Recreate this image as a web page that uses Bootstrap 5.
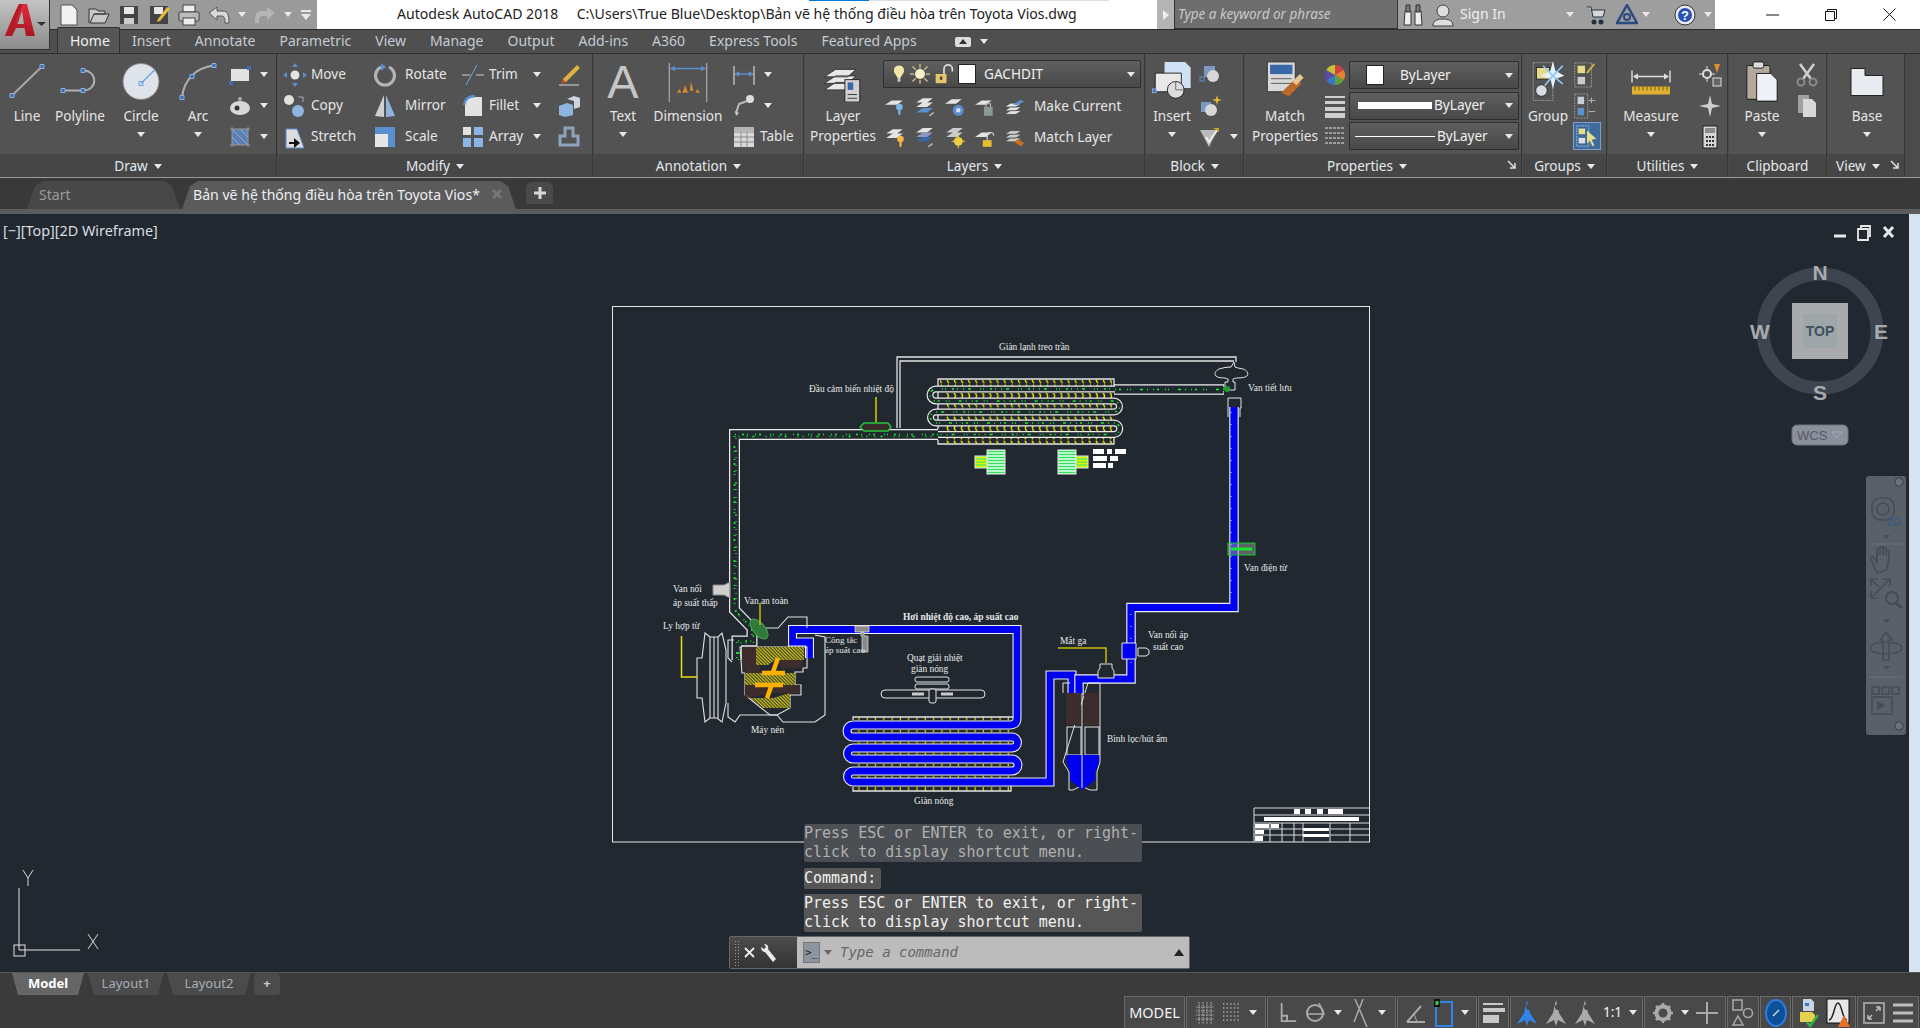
<!DOCTYPE html>
<html lang="vi">
<head>
<meta charset="UTF-8" />
<title>Autodesk AutoCAD 2018</title>
<link href="https://cdn.jsdelivr.net/npm/bootstrap@5.3.2/dist/css/bootstrap.min.css" rel="stylesheet" />
<style>
html,body{height:100%;overflow:hidden}
body{background:#3a3a3a;font-family:"Noto Sans","Liberation Sans",sans-serif;font-size:13.6px;color:#e6e6e6;line-height:1.2}
.app{width:1920px;height:1028px}
.defs-svg{position:absolute}
svg{display:block;flex:none}
.tri{display:inline-block;flex:none;width:0;height:0;border-left:4px solid transparent;border-right:4px solid transparent;border-top:5px solid #e8e8e8}
/* title row */
.title-row{height:29px;background:#fff;flex:none}
.qat{width:317px;background:#9a9a9a;padding-left:58px;gap:8px;height:29px}
.app-btn{position:absolute;left:0;top:0;width:50px;height:50px;background:linear-gradient(#c4c4c4,#8b8b8b);border:1px solid #333;border-left:0;border-top:0;z-index:5}
.title-text{width:840px;padding-left:80px;color:#222;font-size:14.1px;white-space:pre;position:relative}
.title-text::before{content:"";position:absolute;left:492px;top:0;height:1px;width:60px;background:#0078d7}
.title-text::after{content:"";position:absolute;left:552px;top:0;height:1px;width:240px;background:#ddd}
.search-handle{width:17px;background:#b4b4b4}
.search-box{width:224px;background:#6e6e6e;border:1px solid #333;border-top:0;color:#c8c8c8;font-style:italic;padding-left:3px;font-size:13.5px}
.info-zone{width:317px;background:#9e9e9e;color:#efefef;position:relative;white-space:nowrap;font-size:14px}
.iz-bino{margin-left:5px}.iz-user{margin-left:9px}.iz-name{margin-left:6px}.iz-t1{margin-left:60px}.iz-cart{margin-left:12px}.iz-a360{margin-left:10px}.iz-t2{margin-left:4px}.iz-help{margin-left:24px}.iz-t3{margin-left:8px}
.win-btns{width:205px}
.wb-min{margin-right:45px}.wb-max{margin-right:46px}.wb-close{margin-right:24px}
/* ribbon tabs */
.rib-tabs{height:24px;background:#4f4f4f;padding-left:57px;flex:none;border-top:1px solid #2b2b2b}
.rib-tabs .nav-link{padding:0 12px;height:23px;line-height:22px;color:#c3ccd4;font-size:14px;border:0}
.rib-tabs .nav-link.active{background:#565656;color:#f0f0f0;border:1px solid #2f2f2f;border-bottom:0;border-radius:2px 2px 0 0;padding:0 12px;margin-top:-3px;height:26px;line-height:25px;width:63px}
.rib-extra{margin-left:25px}
/* ribbon panels */
.ribbon{height:125px;background:#4b4b4b;flex:none;border-top:1px solid #2f2f2f;border-bottom:1px solid #9a9a9a}
.rp{background:#535353;border-right:1px solid #373737;margin-right:1px;height:123px}
.rp-body{height:100px;padding-top:5px;overflow:hidden}
.rp-foot{height:23px;background:#464646;gap:6px;position:relative;color:#e4e8ec;white-space:nowrap;padding-top:1px}
.foot-launch{padding-right:32px}
.launch{position:absolute;right:4px;top:6px}
.big{display:flex;flex-direction:column;align-items:center;text-align:center;line-height:20px}
.big-ic{height:41px;margin-top:2px;margin-bottom:4px}
.big .tri{margin-top:6px}
.txt-a{font-family:"Liberation Sans",sans-serif;font-size:47px;line-height:41px;color:#c6c6c6}
.sm-row{height:31px;display:flex;align-items:center;white-space:nowrap}
.lbl-ms{margin-left:4px}
.lbl-6{margin-left:6px}
#p-draw{width:277px}#p-modify{width:315px}#p-annot{width:210px}#p-layers{width:340px}#p-block{width:98px}#p-props{width:277px}#p-groups{width:84px}#p-util{width:120px}#p-clip{width:98px}#p-view{width:77px}
.w44{width:44px}.w50{width:50px}.w52{width:52px}.w54{width:54px}.w58{width:58px}.w66{width:66px}.w70{width:70px}.w72{width:72px}.w76{width:76px}.w78{width:78px}.w80{width:80px}.w86{width:86px}
.mod1{width:90px;margin-left:5px}.mod2{width:88px}.mod3{width:96px}.mod4{width:30px}
.combo{height:28px;background:linear-gradient(#5f5f5f,#484848);border:1px solid #2e2e2e;border-radius:1px;padding:0 5px 0 8px;color:#f0f0f0}
.combo-lay{width:258px;margin-left:2px;margin-top:1px;margin-bottom:3px;gap:4px}
.lay-rows{margin-left:3px}
.swatch{width:18px;height:20px;background:#fff;border:1px solid #222}
.prop-rows{gap:2.5px;margin-top:2px}
.prop-combo{width:170px;margin-left:4px}
.sample{background:#fff;margin-right:2px}
.thick{width:74px;height:7px}
.thin{width:80px;height:1px;margin-left:-3px}
.active-ic{background:#3e6a9e;border:1px solid #7da0c8;height:28px;width:28px;display:flex;align-items:center;justify-content:center;margin-top:1px}
/* doc tabs */
.doc-bar{height:36px;background:#393939;padding-left:27px;gap:2px;flex:none;border-bottom:5px solid #5c5c5c}
.doc-tab{height:28px;margin-top:3px;padding:0 30px 0 12px;color:#9a9a9a;background:#484848;clip-path:polygon(0 100%,8px 5px,16px 0,calc(100% - 16px) 0,calc(100% - 8px) 5px,100% 100%);font-size:14.1px;line-height:27px;white-space:nowrap}
.doc-start{width:153px;padding-left:12px}
.doc-cur{width:334px;padding-left:11px;color:#eceff2;background:#5b5b5b;gap:12px}
.doc-plus{width:27px;height:22px;margin:4px 0 0 8px;background:#4a4a4a;border-radius:6px 6px 2px 2px;color:#d8d8d8}
/* viewport */
.vport{height:758px;background:#212830;position:relative;flex:none;overflow:hidden}
.vp-draw{position:absolute;left:0;top:0}
.vp-label{position:absolute;left:3px;top:8px;color:#d9dde0;font-size:14.4px}
.vp-btns{position:absolute;left:1832px;top:11px}
.scroll-edge{position:absolute;left:1909px;top:0;width:11px;height:100%;background:#d6e4f1}
.compass{position:absolute;left:1750px;top:44px}
.wcs-chip{position:absolute;left:1790px;top:210px}
.nav-bar{position:absolute;left:1866px;top:262px;width:40px;height:259px;background:#5a6068;border-radius:3px}
.tip{position:absolute;left:804px;width:338px;background:#565656;border-radius:2px;font-family:"DejaVu Sans Mono","Liberation Mono",monospace;font-size:15px;line-height:19px;color:#f1f1f1;white-space:pre}
.tip-a{top:610px;height:38px;color:#b0b0b0;background:#4b4f53}
.tip-b{top:654px;width:77px;height:21px;line-height:21px}
.tip-c{top:680px;height:38px}
.cmd{position:absolute;left:729px;top:722px;width:461px;height:33px;border:1px solid #666;border-radius:2px;background:linear-gradient(#4c4c4c,#333)}
.cmd-tools{width:67px;gap:5px;padding-left:4px;color:#eee;font-size:16px}
.grip{width:5px;height:26px;background-image:radial-gradient(#9a9a9a 1px,transparent 1px);background-size:3px 3px}
.cmd-in{background:#bcbcbc;color:#666;font-family:"DejaVu Sans Mono","Liberation Mono",monospace;font-style:italic;font-size:14px;padding:0 5px 0 6px;gap:4px}
.cmd-pr{width:17px;height:21px;background:#8d959e;border:1px solid #777;color:#222;font-size:11px;font-style:normal;line-height:19px;text-align:center}
.cmd-tri{border-top-color:#666}
/* layout tabs */
.lay-bar{height:24px;background:#3b3b3b;padding-left:12px;gap:3px;flex:none;border-top:1px solid #565656}
.lay-tab{height:22px;line-height:20px;text-align:center;background:#4b4b4b;color:#a5aeb6;clip-path:polygon(0 0,100% 0,calc(100% - 6px) 100%,6px 100%);font-size:13px}
.lay-model{width:72px;background:#666;color:#fff;font-weight:700;margin-right:1px}
.lay-1{width:76px}.lay-2{width:84px}
.lay-plus{width:26px;font-weight:700;color:#ccc;clip-path:none;border-radius:5px 5px 3px 3px}
/* status */
.stat-bar{height:32px;background:#3b3b3b;padding-left:1124px;gap:1px;flex:none}
.cell{height:32px;background:#494949;border:1px solid #6a6a6a;border-bottom:0;gap:7px;justify-content:center;display:flex;align-items:center;color:#f4f4f4}
.c1{width:61px;font-size:14.5px}.c2{width:80px}.c3{width:129px}.c4{width:80px}.c5{width:31px}.c6{width:133px}.c7{width:82px}.c8{width:32px}.c9{width:31px}.c10{width:64px}.c11{width:62px}
.anno-on{color:#2f86e6}.anno-off{color:#aaa}
.dtx{font-family:"Liberation Serif",serif;font-size:9.4px;fill:#e8e8e8}
</style>
</head>
<body>
<svg class="defs-svg" width="0" height="0">
<defs>
<linearGradient id="g-logo" x1="0" y1="0" x2="0" y2="1"><stop offset="0" stop-color="#e0303c"/><stop offset="1" stop-color="#a81622"/></linearGradient>
<symbol id="i-line" viewBox="0 0 40 40"><path d="M5 34 35 5" stroke="#a8a8a8" stroke-width="2"/><path d="M3 32h4v4H3zM33 3h4v4h-4z" fill="#3d6fae" stroke="#8bb1e0"/></symbol>
<symbol id="i-poly" viewBox="0 0 40 40"><path d="M3 29H23C38 29 38 9 23 9" fill="none" stroke="#b0b0b0" stroke-width="2"/><path d="M1 27h4v4H1zM21 27h4v4h-4zM21 7h4v4h-4z" fill="#3d6fae" stroke="#8bb1e0"/></symbol>
<symbol id="i-circle" viewBox="0 0 40 40"><circle cx="20" cy="20" r="18" fill="#dfe4ea" stroke="#888"/><path d="M20 22 34 8" stroke="#6ea4e6" stroke-width="1.4"/><rect x="18" y="20" width="4" height="4" fill="none" stroke="#6ea4e6"/></symbol>
<symbol id="i-arc" viewBox="0 0 40 40"><path d="M4 36C6 18 18 6 36 4" fill="none" stroke="#b0b0b0" stroke-width="2"/><path d="M2 34h4v4H2zM34 2h4v4h-4zM12 13h4v4h-4z" fill="#3d6fae" stroke="#8bb1e0"/></symbol>
<symbol id="i-rect" viewBox="0 0 24 24"><rect x="3" y="6" width="18" height="12" fill="#e2e2e2"/><path d="M3 18v2M21 6V3" stroke="#222"/><path d="M1 18h4v4H1zM19 3h4v4h-4z" fill="#3d6fae"/></symbol>
<symbol id="i-hatch" viewBox="0 0 24 24"><ellipse cx="12" cy="14" rx="10" ry="7" fill="#d8d8d8"/><circle cx="12" cy="5" r="2" fill="#aaa"/><circle cx="9" cy="14" r="2.5" fill="#333"/></symbol>
<symbol id="i-grad" viewBox="0 0 24 24"><rect x="4" y="4" width="16" height="16" fill="#5f80b4"/><path d="M4 4 20 20M12 4l8 8M4 12l8 8" stroke="#8aa8d8"/><path d="M2 4h20M2 20h20M4 2v20M20 2v20" stroke="#999"/></symbol>
<symbol id="i-move" viewBox="0 0 24 24"><circle cx="12" cy="12" r="4.5" fill="#e4e4e4"/><path d="M12 0l3 4H9zM12 24l3-4H9zM0 12l4-3v6zM24 12l-4-3v6z" fill="#5b8fd0"/></symbol>
<symbol id="i-rotate" viewBox="0 0 24 24"><path d="M8 4a9.5 9.5 0 1 0 8 0" fill="none" stroke="#b5b5b5" stroke-width="3"/><path d="M8 0l5 4-5 4z" fill="#5b8fd0"/></symbol>
<symbol id="i-trim" viewBox="0 0 24 24"><path d="M1 12h8M15 12h8" stroke="#ccc"/><path d="M5 22 16 2" stroke="#6ea4e6"/></symbol>
<symbol id="i-pen" viewBox="0 0 24 24"><path d="M20 2l3 3L9 19l-4 1 1-4z" fill="#e0b040"/><path d="M6 16l3 3-5 2z" fill="#c05020"/><path d="M2 22h20" stroke="#ddd"/></symbol>
<symbol id="i-copy" viewBox="0 0 24 24"><circle cx="6" cy="6" r="5" fill="#e0e0e0"/><circle cx="15" cy="17" r="6" fill="#8fb4de"/><path d="M15 3h5v5" fill="none" stroke="#9ab"/></symbol>
<symbol id="i-mirror" viewBox="0 0 24 24"><path d="M11 1v22L2 22z" fill="#cfcfcf"/><path d="M13 1v22l9-1z" fill="#8fb4de"/></symbol>
<symbol id="i-fillet" viewBox="0 0 24 24"><path d="M4 22V12C4 6 8 3 14 3h7v19z" fill="#e2e2e2"/><path d="M3 11C4 5 8 2 14 2" fill="none" stroke="#5b8fd0" stroke-width="2.5"/></symbol>
<symbol id="i-3d" viewBox="0 0 24 24"><path d="M2 12l8-3 6 2v10l-8 2-6-2z" fill="#8fb4de"/><path d="M10 5l7-3 6 2v9l-6 2V7z" fill="#cfd5dc"/></symbol>
<symbol id="i-stretch" viewBox="0 0 24 24"><path d="M3 4h11l7 19H3z" fill="#dcdcdc" stroke="#5b8fd0"/><path d="M6 18h9" stroke="#111" stroke-width="2"/><path d="M11 13v10l6-5z" fill="#111"/></symbol>
<symbol id="i-scale" viewBox="0 0 24 24"><rect x="2" y="2" width="20" height="20" fill="#5b8fd0"/><rect x="2" y="9" width="13" height="13" fill="#e6e6e6"/></symbol>
<symbol id="i-array" viewBox="0 0 24 24"><path d="M2 2h8v8H2z" fill="#e2e2e2"/><path d="M13 2h9v8h-9zM2 13h8v9H2zM13 13h9v9h-9z" fill="#8ab4e6"/></symbol>
<symbol id="i-join" viewBox="0 0 24 24"><path d="M8 3h8v8h5v9H3v-9h5z" fill="none" stroke="#8fa4bc" stroke-width="3"/></symbol>
<symbol id="i-dim" viewBox="0 0 44 44"><path d="M2 2v42M42 2v42" stroke="#a0a0a0" stroke-width="1.5"/><path d="M3 8h38" stroke="#5b8fd0" stroke-width="1.5"/><path d="M3 8l5-3v6zM41 8l-5-3v6z" fill="#5b8fd0"/><path d="M16 34l3-8 3 8zM24 32l1-10 3 10zM10 34l3-4 2 4zM30 34l2-4 3 4z" fill="#d98a2a"/></symbol>
<symbol id="i-dimsm" viewBox="0 0 24 24"><path d="M2 3v19M22 3v19" stroke="#bbb" stroke-width="1.5"/><path d="M3 11h18" stroke="#5b8fd0" stroke-width="1.5"/><path d="M3 11l4-3v6zM21 11l-4-3v6z" fill="#5b8fd0"/></symbol>
<symbol id="i-lead" viewBox="0 0 24 24"><circle cx="18" cy="5" r="4" fill="#ddd"/><path d="M15 7 7 10l-3 9" fill="none" stroke="#bbb" stroke-width="2"/><path d="M4 22l-1-5 4 2z" fill="#ccc"/></symbol>
<symbol id="i-table" viewBox="0 0 24 24"><rect x="2" y="2" width="20" height="20" fill="#d8d8d8"/><path d="M2 7h20M2 12h20M2 17h20M9 7v15M15 7v15" stroke="#8c8c8c"/><rect x="2" y="2" width="20" height="5" fill="#b5b5b5"/></symbol>
<symbol id="i-layers" viewBox="0 0 44 44"><path d="M2 17 14 9h22l-9 8zM2 24l12-8h22l-9 8zM2 31l12-8h22l-9 8z" fill="#e8e8e8" stroke="#333"/><rect x="24" y="20" width="16" height="24" fill="#d0d0d0" stroke="#222"/><rect x="27" y="23" width="6" height="8" fill="#3868a8"/><path d="M27 36h10M27 40h10" stroke="#333"/></symbol>
<symbol id="i-bulb" viewBox="0 0 20 26"><path d="M10 1c5 0 8 4 7 9-1 3-4 5-5 9H8C7 15 4 13 3 10 2 5 5 1 10 1z" fill="#f2e5a8"/><rect x="8" y="19" width="4" height="5" fill="#ccc"/></symbol>
<symbol id="i-sun" viewBox="0 0 24 24"><circle cx="12" cy="12" r="6" fill="#f5ecc8"/><path d="M12 0v5M12 19v5M0 12h5M19 12h5M3 3l4 4M17 17l4 4M3 21l4-4M17 7l4-4" stroke="#d8c890" stroke-width="1.5"/></symbol>
<symbol id="i-lock" viewBox="0 0 24 24"><rect x="2" y="12" width="13" height="11" fill="#e6c86a"/><rect x="7" y="15" width="3" height="4" fill="#444"/><path d="M12 12V6a5 5 0 0 1 10 0v3" fill="none" stroke="#ddd" stroke-width="2"/></symbol>
<symbol id="i-l1" viewBox="0 0 20 20"><path d="M1 8l6-4h10l-5 4z" fill="#e4e4e4"/><circle cx="14" cy="10" r="3" fill="#7fb2e8"/><rect x="13" y="12" width="2" height="5" fill="#7fb2e8"/></symbol>
<symbol id="i-l2" viewBox="0 0 20 20"><path d="M2 6l6-4h9l-5 4zM2 10l6-4h9l-5 4z" fill="#e4e4e4"/><path d="M2 15l6-4h9l-5 4z" fill="#5b8fd0"/><path d="M14 18l4-3" stroke="#ccc"/></symbol>
<symbol id="i-l3" viewBox="0 0 20 20"><path d="M1 7l6-4h9l-5 4z" fill="#e4e4e4"/><circle cx="13" cy="13" r="5" fill="#5b8fd0"/><circle cx="13" cy="13" r="2" fill="#dde"/></symbol>
<symbol id="i-l4" viewBox="0 0 20 20"><path d="M1 8l6-4h9l-5 4z" fill="#e4e4e4"/><rect x="9" y="10" width="8" height="8" fill="#8a9a90"/><path d="M11 10V7h4v3" fill="none" stroke="#bbb"/></symbol>
<symbol id="i-l5" viewBox="0 0 24 20"><path d="M1 10l6-4h12l-6 4zM1 14l6-4h12l-6 4zM1 18l6-4h12l-6 4z" fill="#e4e4e4" stroke="#333" stroke-width=".5"/><path d="M10 7l8-5 4 2-8 4z" fill="#5b8fd0"/></symbol>
<symbol id="i-l6" viewBox="0 0 20 20"><path d="M2 6l6-4h9l-5 4zM2 10l6-4h9l-5 4z" fill="#e4e4e4"/><circle cx="15" cy="11" r="3" fill="#f2b84a"/><rect x="14" y="13" width="2" height="5" fill="#f2b84a"/></symbol>
<symbol id="i-l7" viewBox="0 0 20 20"><path d="M2 5l6-4h9l-5 4z" fill="#e4e4e4"/><path d="M2 9l6-4h9l-5 4z" fill="#8a9ac0"/><path d="M2 13l6-4h9l-5 4z" fill="#3868a8"/><path d="M13 18l4-3" stroke="#ccc"/></symbol>
<symbol id="i-l8" viewBox="0 0 20 20"><path d="M2 5l6-4h9l-5 4zM2 9l6-4h9l-5 4z" fill="#ccc"/><circle cx="13" cy="13" r="4" fill="#f0d040"/><path d="M13 7v12M7 13h12" stroke="#f0d040"/></symbol>
<symbol id="i-l9" viewBox="0 0 20 20"><path d="M1 9l6-4h9l-5 4z" fill="#e4e4e4"/><rect x="8" y="12" width="8" height="6" fill="#e6c030"/><path d="M12 12V8a3 3 0 0 1 6 0" fill="none" stroke="#ddd"/></symbol>
<symbol id="i-l10" viewBox="0 0 24 20"><path d="M1 6l6-4h12l-6 4zM1 10l6-4h12l-6 4zM1 14l6-4h12l-6 4z" fill="#ccc" stroke="#333" stroke-width=".5"/><path d="M11 14l7 5 4-3-6-5z" fill="#c8702a"/></symbol>
<symbol id="i-insert" viewBox="0 0 44 44"><path d="M14 1h22l6 6v22H14z" fill="#cfe0f4"/><path d="M4 13h28v20H4z" fill="#e8e8e8" stroke="#222"/><circle cx="26" cy="31" r="9" fill="#ddd" stroke="#222"/><path d="M26 31V22M26 31h9" stroke="#666"/><rect x="1" y="30" width="4" height="4" fill="#3d6fae" stroke="#8bb1e0"/></symbol>
<symbol id="i-bl1" viewBox="0 0 24 24"><rect x="6" y="3" width="11" height="11" fill="#7c98c0"/><circle cx="15" cy="13" r="6" fill="#d8d8d8"/><rect x="2" y="14" width="4" height="4" fill="none" stroke="#5b8fd0"/></symbol>
<symbol id="i-bl2" viewBox="0 0 24 24"><rect x="3" y="8" width="10" height="10" fill="#7c98c0"/><circle cx="13" cy="16" r="6" fill="#d8d8d8"/><path d="M19 1l1 4 4 1-4 1-1 4-1-4-4-1 4-1z" fill="#f0c030"/></symbol>
<symbol id="i-bl3" viewBox="0 0 24 24"><path d="M2 5h17l-8 17z" fill="#bbb"/><path d="M8 12l3 5 9-13" fill="none" stroke="#eee" stroke-width="2"/><path d="M15 3h6v4z" fill="#d0a030"/></symbol>
<symbol id="i-match" viewBox="0 0 44 44"><rect x="3" y="1" width="30" height="32" fill="#d8d8d8" stroke="#333"/><rect x="6" y="4" width="24" height="10" fill="#3868a8"/><path d="M7 19h22M7 24h22" stroke="#555"/><path d="M18 34l14-14 8 4-14 14z" fill="#b86a2a"/><path d="M30 22l8-8 4 4-8 8z" fill="#e8c890"/></symbol>
<symbol id="i-wheel" viewBox="0 0 20 20"><path d="M10 10V0a10 10 0 0 1 8.700 5z" fill="#d04040"/><path d="M10 10l8.700-5a10 10 0 0 1 0 10z" fill="#e88030"/><path d="M10 10l8.700 5A10 10 0 0 1 10 20z" fill="#60a040"/><path d="M10 10v10a10 10 0 0 1-8.700-5z" fill="#3878c8"/><path d="M10 10 1.300 15a10 10 0 0 1 0-10z" fill="#6048a8"/><path d="M10 10 1.300 5A10 10 0 0 1 10 0z" fill="#c8c030"/></symbol>
<symbol id="i-lw" viewBox="0 0 20 24"><path d="M0 2h20v2H0zM0 7h20v3H0zM0 13h20v4H0zM0 19h20v5H0z" fill="#cfcfcf"/></symbol>
<symbol id="i-lt" viewBox="0 0 20 20"><path d="M0 2h20M0 7h20M0 12h20M0 17h20" stroke="#b5b5b5" stroke-width="1.6" stroke-dasharray="3 1"/></symbol>
<symbol id="i-group" viewBox="0 0 40 50"><rect x="2" y="2" width="24" height="46" fill="none" stroke="#aaa" stroke-dasharray="2 1"/><rect x="6" y="8" width="16" height="14" fill="#e6dc8a" stroke="#222"/><circle cx="12" cy="36" r="7" fill="#d8dde4" stroke="#222"/><path d="M26 0l3 12 11 6-11 4-3 12-3-12-11-4 11-6z" fill="#e4f2ff"/><path d="M26 18 38 6M26 18 14 6M26 18 38 28M26 18 16 30" stroke="#8cc8f4" stroke-width="2"/></symbol>
<symbol id="i-g1" viewBox="0 0 24 28"><rect x="1" y="1" width="18" height="26" fill="none" stroke="#999" stroke-dasharray="2 1"/><rect x="4" y="4" width="8" height="8" fill="#e6dc8a"/><rect x="4" y="16" width="8" height="8" fill="#ccc"/><path d="M14 12 22 2" stroke="#d8b040" stroke-width="2"/></symbol>
<symbol id="i-g2" viewBox="0 0 24 28"><rect x="1" y="1" width="14" height="26" fill="none" stroke="#999" stroke-dasharray="2 1"/><rect x="4" y="4" width="7" height="8" fill="#c8d0dc"/><rect x="4" y="16" width="7" height="8" fill="#5b8fd0"/><path d="M16 8h7M19 5v6M16 20h7" stroke="#bbb"/></symbol>
<symbol id="i-g3" viewBox="0 0 24 28"><rect x="1" y="3" width="13" height="22" fill="none" stroke="#9cc" stroke-dasharray="2 1"/><rect x="3" y="6" width="7" height="6" fill="#e6dc8a"/><rect x="3" y="16" width="7" height="6" fill="#ddd"/><path d="M12 8l10 9-5 1 3 6-2 1-3-6-3 3z" fill="#e6dc8a"/></symbol>
<symbol id="i-measure" viewBox="0 0 40 30"><path d="M1 4v12M39 4v12M3 10h34" stroke="#e0e0e0" stroke-width="1.4"/><path d="M2 10l5-3v6zM38 10l-5-3v6z" fill="#e0e0e0"/><rect x="1" y="20" width="38" height="8" fill="#e0b030"/><path d="M4 20v4M8 20v4M12 20v4M16 20v4M20 20v4M24 20v4M28 20v4M32 20v4M36 20v4" stroke="#7a5a10"/></symbol>
<symbol id="i-u1" viewBox="0 0 24 24"><circle cx="9" cy="11" r="4" fill="none" stroke="#ddd" stroke-width="2"/><path d="M9 3v4M9 15v4M1 11h4M13 11h4" stroke="#ddd"/><rect x="15" y="15" width="8" height="8" fill="#666" stroke="#ddd"/><path d="M16 1h6l-3 9z" fill="#e09030"/></symbol>
<symbol id="i-u2" viewBox="0 0 24 24"><path d="M12 1l2 9 9 2-9 2-2 9-2-9-9-2 9-2z" fill="#cfcfcf"/></symbol>
<symbol id="i-calc" viewBox="0 0 24 24"><rect x="5" y="1" width="14" height="22" fill="#d6d6d6" stroke="#222"/><rect x="7" y="3" width="10" height="5" fill="#8a8a8a"/><path d="M8 12h2M11 12h2M14 12h2M8 16h2M11 16h2M14 16h2M8 20h2M11 20h2M14 20h2" stroke="#333" stroke-width="2"/></symbol>
<symbol id="i-paste" viewBox="0 0 36 46"><rect x="1" y="5" width="26" height="38" rx="2" fill="#b3a99b" stroke="#111"/><rect x="8" y="1" width="12" height="7" rx="2" fill="#ddd" stroke="#111"/><path d="M12 14h16l7 7v24H12z" fill="#eef1f5" stroke="#111"/></symbol>
<symbol id="i-cut" viewBox="0 0 24 24"><path d="M5 1l11 15M19 1 8 16" stroke="#d0d0d0" stroke-width="2.500"/><circle cx="6" cy="19" r="3.500" fill="none" stroke="#8a8a8a" stroke-width="2"/><circle cx="18" cy="19" r="3.500" fill="none" stroke="#8a8a8a" stroke-width="2"/></symbol>
<symbol id="i-cpy" viewBox="0 0 24 24"><path d="M3 1h11v18H3z" fill="#a0a0a0"/><path d="M8 5h9l4 4v14H8z" fill="#d8d8d8"/></symbol>
<symbol id="i-base" viewBox="0 0 34 30"><path d="M1 2h14v7h18v20H1z" fill="#e8ebef" stroke="#222"/></symbol>
<symbol id="i-launch" viewBox="0 0 10 10"><path d="M1 1 8 8M8 3v5H3" fill="none" stroke="#ddd" stroke-width="1.5"/></symbol>
<symbol id="st-grid" viewBox="0 0 20 22"><path d="M1 5h18M1 9h18M1 13h18M1 17h18M4 0v22M8 0v22M12 0v22M16 0v22" stroke="#a8a8a8" stroke-width="1.2" stroke-dasharray="1.500 1"/></symbol>
<symbol id="st-dots" viewBox="0 0 20 22"><path d="M1 2h18M1 6h18M1 10h18M1 14h18M1 18h18" stroke="#a8a8a8" stroke-width="1.4" stroke-dasharray="1.400 2.200"/></symbol>
<symbol id="st-ortho" viewBox="0 0 22 26"><path d="M4 2v20h16M4 16h6v6" fill="none" stroke="#aaa" stroke-width="2"/></symbol>
<symbol id="st-polar" viewBox="0 0 22 26"><circle cx="10" cy="13" r="8" fill="none" stroke="#aaa" stroke-width="2"/><path d="M3 14h16L14 3" fill="none" stroke="#aaa" stroke-width="1.500"/></symbol>
<symbol id="st-iso" viewBox="0 0 22 30"><path d="M6 1 18 29M14 1 5 24" stroke="#aaa" stroke-width="1.500"/></symbol>
<symbol id="st-ang" viewBox="0 0 22 26"><path d="M2 22h18M2 22 16 6" stroke="#aaa" stroke-width="2"/><path d="M9 14l3 8" stroke="#aaa"/></symbol>
<symbol id="st-snap" viewBox="0 0 20 30"><rect x="2" y="4" width="16" height="24" fill="none" stroke="#2f86e6" stroke-width="2"/><rect x="0" y="1" width="6" height="8" fill="#111"/><rect x="1.500" y="3" width="3" height="4" fill="#2ed04a"/></symbol>
<symbol id="st-lw" viewBox="0 0 22 24"><path d="M0 2h20v2H0zM0 7h22v4H0zM0 14h16v8H0z" fill="#c8c8c8"/></symbol>
<symbol id="st-anno" viewBox="0 0 22 28"><path d="M11 1l3 13 7 11-8-4-2 6-2-6-8 4 7-11z" fill="currentColor"/><circle cx="13" cy="8" r="3" fill="#494949"/></symbol>
<symbol id="st-gear" viewBox="0 0 22 22"><circle cx="11" cy="11" r="6.500" fill="none" stroke="#aaa" stroke-width="4"/><path d="M11 1v4M11 17v4M1 11h4M17 11h4M4 4l3 3M15 15l3 3M4 18l3-3M15 7l3-3" stroke="#aaa" stroke-width="2.500"/></symbol>
<symbol id="st-plus" viewBox="0 0 22 22"><path d="M11 0v22M0 11h22" stroke="#aaa" stroke-width="2"/></symbol>
<symbol id="st-shapes" viewBox="0 0 22 28"><rect x="1" y="1" width="9" height="10" fill="none" stroke="#aaa" stroke-width="1.500"/><circle cx="16" cy="14" r="4.500" fill="none" stroke="#aaa" stroke-width="1.500"/><path d="M6 17l5 9H1z" fill="none" stroke="#aaa" stroke-width="1.500"/></symbol>
<symbol id="st-blue" viewBox="0 0 24 30"><ellipse cx="12" cy="15" rx="10" ry="13" fill="#0d4f98" stroke="#2b7be0" stroke-width="2"/><path d="M9 18l6-6" stroke="#cde" stroke-width="1.400"/></symbol>
<symbol id="st-work" viewBox="0 0 20 30"><path d="M4 1h8l3 3v9H4z" fill="#c8d4e4"/><rect x="6" y="5" width="4" height="3" fill="#3878c8"/><path d="M1 14h12l3 3v7H1z" fill="#e6d050"/><path d="M8 24l3 4 8-11" fill="none" stroke="#35b04a" stroke-width="2.500"/></symbol>
<symbol id="st-grh" viewBox="0 0 24 30"><rect x="1" y="1" width="22" height="24" fill="#e6e6e6" stroke="#111"/><path d="M3 22C8 22 8 5 12 5s4 17 9 17" fill="none" stroke="#222" stroke-width="1.500"/><path d="M18 17l6 12H12z" fill="#e0702a"/></symbol>
<symbol id="st-full" viewBox="0 0 22 22"><rect x="1" y="1" width="20" height="20" fill="none" stroke="#9a9a9a" stroke-width="2"/><path d="M5 17l4-4M17 5l-4 4M5 17v-4M5 17h4M17 5v4M17 5h-4" stroke="#bcbcbc" stroke-width="1.500"/></symbol>
<symbol id="st-menu" viewBox="0 0 22 22"><path d="M1 3h20M1 11h20M1 19h20" stroke="#bcbcbc" stroke-width="3"/></symbol>
<pattern id="pt-l" width="7.100" height="8" patternUnits="userSpaceOnUse"><path d="M4.500.8Q1.500 4 4.500 7.200" fill="none" stroke="#f2e400" stroke-width="1.300"/></pattern>
<pattern id="pt-r" width="7.100" height="8" patternUnits="userSpaceOnUse"><path d="M2.500.8Q5.500 4 2.500 7.200" fill="none" stroke="#f2e400" stroke-width="1.300"/></pattern>
<pattern id="pt-t" width="8.300" height="8" patternUnits="userSpaceOnUse"><path d="M4 0v8" stroke="#d8c800" stroke-width="1.300"/></pattern>
<pattern id="pt-h" width="2.400" height="2.400" patternUnits="userSpaceOnUse" patternTransform="rotate(45)"><rect width="2.400" height="2.400" fill="#3b3a22"/><path d="M0 1h2.400" stroke="#d4cc20" stroke-width="1.200"/></pattern>
<pattern id="pt-g" width="2" height="3" patternUnits="userSpaceOnUse"><rect width="2" height="3" fill="#eafff0"/><path d="M0 1.500h2" stroke="#2ee05a" stroke-width="1.300"/></pattern>
<pattern id="pt-y" width="3" height="3" patternUnits="userSpaceOnUse"><rect width="3" height="3" fill="#7dee3a"/><path d="M0 1.500h3" stroke="#e8f000" stroke-width="1"/></pattern>
<path id="p-coil" d="M1224 389H936A6 6 0 0 0 936 401H1114A5.500 5.500 0 0 1 1114 412H936A5.500 5.500 0 0 0 936 423H1114A5.500 5.500 0 0 1 1114 434.500H938"/>
<path id="p-low" d="M938 434.500H734.500V610L752 628V641H737V660"/>
<path id="p-hot" d="M809.500 658V642H792.500V629.500H1017V718Q1017 725 1010 725H853A6 6 0 0 0 853 737H1012A5.500 5.500 0 0 1 1012 748H853A5.500 5.500 0 0 0 853 759H1012A5.500 5.500 0 0 1 1012 771H853A5.500 5.500 0 0 0 853 782H1050V675H1072V695"/>
<path id="p-liq" d="M1079 695V679H1131V607.500H1234V407"/>
</defs>
</svg>

<div class="app d-flex flex-column position-relative">

<div class="app-btn">
  <svg width="49" height="49" viewBox="0 0 49 49"><path fill-rule="evenodd" d="M5 36C10 24 15 12 19 4H27L35 36H26L24.500 28H16L12 36ZM17.500 24H24L22 11Z" fill="url(#g-logo)"/><path d="M19 4H23C18 14 14 26 9 36H5C10 24 15 12 19 4Z" fill="#b41c28"/><path d="M37 22h9l-4.500 4z" fill="#333"/></svg>
</div>

<div class="title-row d-flex">
  <div class="qat d-flex align-items-center">
    <svg width="22" height="22" viewBox="0 0 22 22"><path d="M3 1h11l5 5v15H3z" fill="#f2f2f2" stroke="#555"/></svg>
    <svg width="22" height="22" viewBox="0 0 22 22"><path d="M1 19V5h7l2 2h7v3H6l-4 9 15 0 4-9H6" fill="#c8c8c8" stroke="#333"/></svg>
    <svg width="22" height="22" viewBox="0 0 22 22"><path d="M2 2h18v18H2z" fill="#444"/><rect x="6" y="3" width="10" height="7" fill="#e8e8e8"/><rect x="6" y="14" width="10" height="6" fill="#ccc"/></svg>
    <svg width="22" height="22" viewBox="0 0 22 22"><path d="M2 2h18v18H2z" fill="#444"/><rect x="6" y="3" width="9" height="7" fill="#e8e8e8"/><path d="M10 15l9-12 3 2-10 12-3 1z" fill="#e6b840"/></svg>
    <svg width="22" height="22" viewBox="0 0 22 22"><rect x="5" y="1" width="12" height="7" fill="#eee" stroke="#444"/><rect x="1" y="8" width="20" height="9" rx="1" fill="#bbb" stroke="#444"/><rect x="5" y="14" width="12" height="7" fill="#eee" stroke="#444"/></svg>
    <svg width="22" height="18" viewBox="0 0 22 18"><path d="M1 7l8-6v4h6c5 0 6 4 6 12h-4c0-5-1-7-3-7H9v4z" fill="#d9d9d9" stroke="#555"/></svg>
    <span class="tri"></span>
    <svg width="22" height="18" viewBox="0 0 22 18"><path d="M21 7l-8-6v4H7C2 5 1 9 1 17h4c0-5 1-7 3-7h5v4z" fill="#b4b4b4"/></svg>
    <span class="tri"></span>
    <svg width="12" height="12" viewBox="0 0 12 12"><path d="M1 1h10v2H1zM1 5h10L6 11z" fill="#e8e8e8"/></svg>
  </div>
  <div class="title-text d-flex align-items-center">Autodesk AutoCAD 2018     C:\Users\True Blue\Desktop\Bản vẽ hệ thống điều hòa trên Toyota Vios.dwg</div>
  <div class="search-handle d-flex align-items-center justify-content-center"><svg width="6" height="10" viewBox="0 0 6 10"><path d="M0 0l6 5-6 5z" fill="#eee"/></svg></div>
  <div class="search-box d-flex align-items-center">Type a keyword or phrase</div>
  <div class="info-zone d-flex align-items-center">
    <svg class="iz-bino" width="20" height="24" viewBox="0 0 20 24"><path d="M2 8h6v14H1zM12 8h6l1 14h-7z" fill="#eee" stroke="#333"/><path d="M3 2h4v7H3zM13 2h4v7h-4z" fill="#777" stroke="#333"/></svg>
    <svg class="iz-user" width="22" height="24" viewBox="0 0 22 24"><circle cx="11" cy="8" r="6" fill="#ddd" stroke="#444"/><path d="M1 23c0-6 5-7 10-7s10 1 10 7z" fill="#ddd" stroke="#444"/></svg>
    <span class="iz-name">Sign In</span>
    <span class="tri iz-t1"></span>
    <svg class="iz-cart" width="20" height="22" viewBox="0 0 20 22"><path d="M1 3h4l2 10h10l2-7H6" fill="#d8d8d8" stroke="#234"/><circle cx="8" cy="18" r="2.500" fill="#234"/><circle cx="15" cy="18" r="2.500" fill="#234"/></svg>
    <svg class="iz-a360" width="22" height="22" viewBox="0 0 22 22"><path d="M11 1 21 19H1z" fill="none" stroke="#2b4a80" stroke-width="2.500"/><circle cx="11" cy="13" r="3" fill="none" stroke="#2b4a80" stroke-width="2"/></svg>
    <span class="tri iz-t2"></span>
    <svg class="iz-help" width="22" height="22" viewBox="0 0 22 22"><circle cx="11" cy="11" r="10" fill="#e8ecf4" stroke="#333"/><circle cx="11" cy="11" r="7" fill="#2850b8"/><text x="11" y="16" text-anchor="middle" font-family="Liberation Sans" font-weight="700" font-size="13" fill="#fff">?</text></svg>
    <span class="tri iz-t3"></span>
  </div>
  <div class="win-btns d-flex align-items-center">
    <svg class="ms-auto wb-min" width="14" height="14" viewBox="0 0 14 14"><path d="M0 7h13" stroke="#111"/></svg>
    <svg class="wb-max" width="12" height="12" viewBox="0 0 12 12"><path d="M.5 2.500h9v9h-9zM2.500 2.500v-2h9v9h-2" fill="none" stroke="#111"/></svg>
    <svg class="wb-close" width="13" height="13" viewBox="0 0 13 13"><path d="M.5.5l12 12M12.500.5l-12 12" stroke="#111"/></svg>
  </div>
</div>

<ul class="rib-tabs nav">
  <li class="nav-item"><a class="nav-link active">Home</a></li>
  <li class="nav-item"><a class="nav-link">Insert</a></li>
  <li class="nav-item"><a class="nav-link">Annotate</a></li>
  <li class="nav-item"><a class="nav-link">Parametric</a></li>
  <li class="nav-item"><a class="nav-link">View</a></li>
  <li class="nav-item"><a class="nav-link">Manage</a></li>
  <li class="nav-item"><a class="nav-link">Output</a></li>
  <li class="nav-item"><a class="nav-link">Add-ins</a></li>
  <li class="nav-item"><a class="nav-link">A360</a></li>
  <li class="nav-item"><a class="nav-link">Express Tools</a></li>
  <li class="nav-item"><a class="nav-link">Featured Apps</a></li>
  <li class="nav-item d-flex align-items-center rib-extra gap-2"><svg width="18" height="12" viewBox="0 0 18 12"><rect x="1" y="1" width="16" height="10" rx="2" fill="#ddd"/><path d="M9 3l4 5H5z" fill="#333"/></svg><span class="tri"></span></li>
</ul>

<div class="ribbon d-flex">
  <div class="rp" id="p-draw">
    <div class="rp-body d-flex">
      <div class="big w54"><svg class="big-ic" width="40" height="41"><use href="#i-line"/></svg>Line</div>
      <div class="big w52"><svg class="big-ic" width="40" height="41"><use href="#i-poly"/></svg>Polyline</div>
      <div class="big w70"><svg class="big-ic" width="40" height="41"><use href="#i-circle"/></svg>Circle<span class="tri"></span></div>
      <div class="big w44"><svg class="big-ic" width="40" height="41"><use href="#i-arc"/></svg>Arc<span class="tri"></span></div>
      <div class="ms-2">
        <div class="sm-row"><svg width="24" height="24"><use href="#i-rect"/></svg><span class="tri ms-2"></span></div>
        <div class="sm-row"><svg width="24" height="24"><use href="#i-hatch"/></svg><span class="tri ms-2"></span></div>
        <div class="sm-row"><svg width="24" height="24"><use href="#i-grad"/></svg><span class="tri ms-2"></span></div>
      </div>
    </div>
    <div class="rp-foot d-flex align-items-center justify-content-center">Draw <span class="tri"></span></div>
  </div>

  <div class="rp" id="p-modify">
    <div class="rp-body d-flex">
      <div class="mod1">
        <div class="sm-row"><svg width="24" height="24"><use href="#i-move"/></svg><span class="lbl-ms">Move</span></div>
        <div class="sm-row"><svg width="24" height="24"><use href="#i-copy"/></svg><span class="lbl-ms">Copy</span></div>
        <div class="sm-row"><svg width="24" height="24"><use href="#i-stretch"/></svg><span class="lbl-ms">Stretch</span></div>
      </div>
      <div class="mod2">
        <div class="sm-row"><svg width="24" height="24"><use href="#i-rotate"/></svg><span class="ms-2">Rotate</span></div>
        <div class="sm-row"><svg width="24" height="24"><use href="#i-mirror"/></svg><span class="ms-2">Mirror</span></div>
        <div class="sm-row"><svg width="24" height="24"><use href="#i-scale"/></svg><span class="ms-2">Scale</span></div>
      </div>
      <div class="mod3">
        <div class="sm-row pe-3"><svg width="24" height="24"><use href="#i-trim"/></svg><span class="lbl-ms">Trim</span><span class="tri ms-auto"></span></div>
        <div class="sm-row pe-3"><svg width="24" height="24"><use href="#i-fillet"/></svg><span class="lbl-ms">Fillet</span><span class="tri ms-auto"></span></div>
        <div class="sm-row pe-3"><svg width="24" height="24"><use href="#i-array"/></svg><span class="lbl-ms">Array</span><span class="tri ms-auto"></span></div>
      </div>
      <div class="mod4">
        <div class="sm-row"><svg width="24" height="24"><use href="#i-pen"/></svg></div>
        <div class="sm-row"><svg width="24" height="24"><use href="#i-3d"/></svg></div>
        <div class="sm-row"><svg width="24" height="24"><use href="#i-join"/></svg></div>
      </div>
    </div>
    <div class="rp-foot d-flex align-items-center justify-content-center">Modify <span class="tri"></span></div>
  </div>

  <div class="rp" id="p-annot">
    <div class="rp-body d-flex">
      <div class="big w58"><span class="big-ic txt-a">A</span>Text<span class="tri"></span></div>
      <div class="big w72"><svg class="big-ic" width="44" height="41"><use href="#i-dim"/></svg>Dimension</div>
      <div class="ms-2">
        <div class="sm-row"><svg width="24" height="24"><use href="#i-dimsm"/></svg><span class="tri ms-2"></span></div>
        <div class="sm-row"><svg width="24" height="24"><use href="#i-lead"/></svg><span class="tri ms-2"></span></div>
        <div class="sm-row"><svg width="24" height="24"><use href="#i-table"/></svg><span class="lbl-ms">Table</span></div>
      </div>
    </div>
    <div class="rp-foot d-flex align-items-center justify-content-center">Annotation <span class="tri"></span></div>
  </div>

  <div class="rp" id="p-layers">
    <div class="rp-body d-flex">
      <div class="big w76"><svg class="big-ic" width="44" height="44"><use href="#i-layers"/></svg>Layer<br>Properties</div>
      <div>
        <div class="combo combo-lay d-flex align-items-center">
          <svg width="14" height="20"><use href="#i-bulb"/></svg>
          <svg width="20" height="20"><use href="#i-sun"/></svg>
          <svg width="20" height="20"><use href="#i-lock"/></svg>
          <span class="swatch"></span><span class="ms-1">GACHDIT</span><span class="tri ms-auto"></span>
        </div>
        <div class="lay-rows">
          <div class="sm-row gap-2"><svg width="22" height="22"><use href="#i-l1"/></svg><svg width="22" height="22"><use href="#i-l2"/></svg><svg width="22" height="22"><use href="#i-l3"/></svg><svg width="22" height="22"><use href="#i-l4"/></svg><svg width="22" height="22"><use href="#i-l5"/></svg><span>Make Current</span></div>
          <div class="sm-row gap-2"><svg width="22" height="22"><use href="#i-l6"/></svg><svg width="22" height="22"><use href="#i-l7"/></svg><svg width="22" height="22"><use href="#i-l8"/></svg><svg width="22" height="22"><use href="#i-l9"/></svg><svg width="22" height="22"><use href="#i-l10"/></svg><span>Match Layer</span></div>
        </div>
      </div>
    </div>
    <div class="rp-foot d-flex align-items-center justify-content-center">Layers <span class="tri"></span></div>
  </div>

  <div class="rp" id="p-block">
    <div class="rp-body d-flex">
      <div class="big w52"><svg class="big-ic" width="44" height="41"><use href="#i-insert"/></svg>Insert<span class="tri"></span></div>
      <div>
        <div class="sm-row"><svg width="24" height="24"><use href="#i-bl1"/></svg></div>
        <div class="sm-row"><svg width="24" height="24"><use href="#i-bl2"/></svg></div>
        <div class="sm-row"><svg width="24" height="24"><use href="#i-bl3"/></svg><span class="tri ms-2"></span></div>
      </div>
    </div>
    <div class="rp-foot d-flex align-items-center justify-content-center">Block <span class="tri"></span></div>
  </div>

  <div class="rp" id="p-props">
    <div class="rp-body d-flex">
      <div class="big w80"><svg class="big-ic" width="44" height="44"><use href="#i-match"/></svg>Match<br>Properties</div>
      <div class="prop-rows d-flex flex-column">
        <div class="d-flex align-items-center"><svg width="20" height="20"><use href="#i-wheel"/></svg><div class="combo prop-combo d-flex align-items-center"><span class="swatch ms-2"></span><span class="ms-3">ByLayer</span><span class="tri ms-auto"></span></div></div>
        <div class="d-flex align-items-center"><svg width="20" height="24"><use href="#i-lw"/></svg><div class="combo prop-combo d-flex align-items-center"><span class="sample thick"></span><span>ByLayer</span><span class="tri ms-auto"></span></div></div>
        <div class="d-flex align-items-center"><svg width="20" height="20"><use href="#i-lt"/></svg><div class="combo prop-combo d-flex align-items-center"><span class="sample thin"></span><span>ByLayer</span><span class="tri ms-auto"></span></div></div>
      </div>
    </div>
    <div class="rp-foot foot-launch d-flex align-items-center justify-content-center">Properties <span class="tri"></span><svg class="launch" width="10" height="10"><use href="#i-launch"/></svg></div>
  </div>

  <div class="rp" id="p-groups">
    <div class="rp-body d-flex">
      <div class="big w50"><svg class="big-ic" width="40" height="44"><use href="#i-group"/></svg>Group</div>
      <div>
        <div class="sm-row"><svg width="24" height="26"><use href="#i-g1"/></svg></div>
        <div class="sm-row"><svg width="24" height="26"><use href="#i-g2"/></svg></div>
        <div class="active-ic"><svg width="24" height="26"><use href="#i-g3"/></svg></div>
      </div>
    </div>
    <div class="rp-foot d-flex align-items-center justify-content-center">Groups <span class="tri"></span></div>
  </div>

  <div class="rp" id="p-util">
    <div class="rp-body d-flex">
      <div class="big w86"><svg class="big-ic" width="40" height="30"><use href="#i-measure"/></svg>Measure<span class="tri"></span></div>
      <div class="ms-1">
        <div class="sm-row"><svg width="24" height="24"><use href="#i-u1"/></svg></div>
        <div class="sm-row"><svg width="24" height="24"><use href="#i-u2"/></svg></div>
        <div class="sm-row"><svg width="24" height="24"><use href="#i-calc"/></svg></div>
      </div>
    </div>
    <div class="rp-foot d-flex align-items-center justify-content-center">Utilities <span class="tri"></span></div>
  </div>

  <div class="rp" id="p-clip">
    <div class="rp-body d-flex">
      <div class="big w66"><svg class="big-ic" width="36" height="46"><use href="#i-paste"/></svg>Paste<span class="tri"></span></div>
      <div>
        <div class="sm-row"><svg width="24" height="24"><use href="#i-cut"/></svg></div>
        <div class="sm-row"><svg width="24" height="24"><use href="#i-cpy"/></svg></div>
      </div>
    </div>
    <div class="rp-foot d-flex align-items-center justify-content-center">Clipboard</div>
  </div>

  <div class="rp" id="p-view">
    <div class="rp-body">
      <div class="big w78"><svg class="big-ic" width="34" height="30"><use href="#i-base"/></svg>Base<span class="tri"></span></div>
    </div>
    <div class="rp-foot d-flex align-items-center justify-content-start ps-2">View <span class="tri"></span><svg class="launch" width="10" height="10"><use href="#i-launch"/></svg></div>
  </div>
</div>

<div class="doc-bar d-flex">
  <div class="doc-tab doc-start">Start</div>
  <div class="doc-tab doc-cur d-flex">Bản vẽ hệ thống điều hòa trên Toyota Vios*<svg class="mt-2" width="10" height="10" viewBox="0 0 10 10"><path d="M1 1l8 8M9 1 1 9" stroke="#777" stroke-width="2.500"/></svg></div>
  <div class="doc-plus d-flex align-items-center justify-content-center"><svg width="12" height="12" viewBox="0 0 12 12"><path d="M6 0v12M0 6h12" stroke="#d8d8d8" stroke-width="3"/></svg></div>
</div>

<div class="vport">
  <svg class="vp-draw" width="1920" height="758" viewBox="0 214 1920 758">
    <!-- sheet frame -->
    <rect x="612.500" y="306.500" width="757" height="535.500" fill="none" stroke="#e8e8e8"/>

    <!-- evaporator -->
    <path d="M938 429V379H1114V386M938 440V444H1114V437" fill="none" stroke="#e4e4e4" stroke-width="1.300"/>
    <rect x="940" y="380" width="172" height="8" fill="url(#pt-l)"/>
    <rect x="944" y="393" width="168" height="8" fill="url(#pt-r)"/>
    <rect x="944" y="404" width="168" height="8" fill="url(#pt-l)"/>
    <rect x="944" y="415" width="168" height="8" fill="url(#pt-r)"/>
    <rect x="944" y="425" width="168" height="8" fill="url(#pt-l)"/>
    <rect x="944" y="436" width="168" height="7.500" fill="url(#pt-r)"/>
    <use href="#p-coil" fill="none" stroke="#ececec" stroke-width="7"/>
    <use href="#p-coil" fill="none" stroke="#212830" stroke-width="4.600"/>
    <use href="#p-coil" fill="none" stroke="#14f02a" stroke-width="1.500" stroke-dasharray="1 3 2 6 1 2 1 9 3 4 1 5"/>
    <path d="M1114 385H1224M1114 394H1224" stroke="#ececec" stroke-width="1.300" fill="none"/>
    <rect x="1115" y="385.600" width="108" height="7.800" fill="#212830"/>
    <path d="M1115 389.500H1222" stroke="#14f02a" stroke-width="1.500" stroke-dasharray="1 3 2 6 1 2 1 9 3 4 1 5"/>

    <!-- capillary to expansion valve -->
    <path d="M897 428V357H1236V362M900 428V361H1234" fill="none" stroke="#e4e4e4" stroke-width="1.300"/>
    <path d="M1234 362l-3 5q-6 0-12 2c-4 2-5 5-3 7 4 3 8 1 12 3v3h-3v8h10v-8h-2v-3c4-2 10 0 14-3 2-2 0-6-4-7q-6-1-8-2l-1-5z" fill="#212830" stroke="#e4e4e4"/>
    <path d="M1228 398h13v10h-1V417M1228 398v19" fill="none" stroke="#e4e4e4"/>
    <circle cx="1227" cy="389" r="3" fill="#1aa030"/>

    <!-- low pressure line -->
    <use href="#p-low" fill="none" stroke="#ececec" stroke-width="11"/>
    <use href="#p-low" fill="none" stroke="#212830" stroke-width="8.500"/>
    <use href="#p-low" fill="none" stroke="#14f02a" stroke-width="1.700" stroke-dasharray="1 3 2 6 1 2 1 9 2 3 1 7"/>
    <use href="#p-low" fill="none" stroke="#14f02a" stroke-width="1.300" stroke-dasharray="1 7 1 4 1 11 2 5" transform="translate(1.500 2)"/>

    <!-- temperature bulb -->
    <path d="M876 397V422" stroke="#d8cc00" stroke-width="1.500"/>
    <path d="M864 423H888L891 427 888 431H864L860 427z" fill="#3a2c2c" stroke="#24c83a" stroke-width="1.300"/>

    <!-- fan units under the evaporator -->
    <g stroke="#e8e8e8">
      <rect x="987" y="450" width="18" height="24" fill="url(#pt-g)"/>
      <rect x="975" y="456" width="12" height="12" fill="url(#pt-y)"/>
      <rect x="1058" y="450" width="18" height="24" fill="url(#pt-g)"/>
      <rect x="1076" y="456" width="12" height="12" fill="url(#pt-y)"/>
    </g>
    <path d="M1093 449h11v5h-11zM1107 449h5v5h-5zM1115 449h11v5h-11zM1093 456h14v5h-14zM1110 456h8v5h-8zM1093 463h13v5h-13zM1108 463h5v5h-5z" fill="#fff"/>

    <!-- high pressure line -->
    <use href="#p-hot" fill="none" stroke="#ececec" stroke-width="9"/>
    <rect x="853" y="717" width="158" height="3.500" fill="url(#pt-t)"/>
    <rect x="853" y="730" width="158" height="2.500" fill="url(#pt-t)"/>
    <rect x="853" y="741.500" width="158" height="2.500" fill="url(#pt-t)"/>
    <rect x="853" y="752.500" width="158" height="2.500" fill="url(#pt-t)"/>
    <rect x="853" y="764" width="158" height="2.500" fill="url(#pt-t)"/>
    <rect x="853" y="775.500" width="158" height="2.500" fill="url(#pt-t)"/>
    <rect x="853" y="787" width="158" height="4" fill="url(#pt-t)"/>
    <use href="#p-hot" fill="none" stroke="#0000f0" stroke-width="6.800"/>
    <path d="M853 720V717H1013M853 787V791H1011V786" fill="none" stroke="#e4e4e4" stroke-width="1.300"/>
    <use href="#p-liq" fill="none" stroke="#ececec" stroke-width="9.500"/>
    <use href="#p-liq" fill="none" stroke="#0000f0" stroke-width="7.200"/>
    <path d="M1231 412V600M1131 614V670" stroke="#dde" stroke-width="1" stroke-dasharray="1 11" fill="none"/>

    <!-- solenoid + switch -->
    <rect x="1228" y="543" width="27" height="12" fill="#9a9a9a" fill-opacity=".5" stroke="#19c82e"/>
    <path d="M1231 549H1252" stroke="#19e62e" stroke-width="3"/>
    <path d="M1122 643h14v16h-14z" fill="#0000f0" stroke="#e4e4e4"/>
    <path d="M1138 648h8l3 2v4l-3 2h-8z" fill="none" stroke="#e4e4e4"/>
    <path d="M713 585h11l6-3v16l-6-3h-11z" fill="#cfcfcf" stroke="#888"/>

    <!-- receiver -->
    <path d="M1063 693V683H1070M1088 683H1100V762L1097 772V790H1090L1081 786 1073 790H1069V772L1063 762z" fill="none" stroke="#e4e4e4"/>
    <rect x="1066" y="693" width="15" height="32" fill="#3c2c2c"/>
    <rect x="1084" y="693" width="15" height="32" fill="#3c2c2c"/>
    <rect x="1067" y="727" width="14" height="28" fill="none" stroke="#e4e4e4"/>
    <rect x="1085" y="727" width="14" height="28" fill="none" stroke="#e4e4e4"/>
    <path d="M1067 755H1099V763L1095 772V780L1082 790 1070 780V772L1067 763z" fill="#0000f0"/>
    <path d="M1082 693V788" stroke="#e4e4e4"/>
    <path d="M1058 648H1106V663" fill="none" stroke="#c8bc00" stroke-width="1.500"/>
    <path d="M1100 664h12v4l2 3v7h-16v-7l2-3z" fill="#212830" stroke="#e4e4e4"/>

    <!-- compressor -->
    <g fill="none" stroke="#e4e4e4" stroke-width="1.100">
      <path d="M705 633 710 637H718L722 633 726 650V703L722 722 717 718H710L705 722 702 698H697V658H702z"/>
      <path d="M710 637V718M714 637V718M718 637V718"/>
      <path d="M734 640H728V658L732 662M728 703V717L735 722 740 715H777L783 722H815L825 715V637L815 635"/>
      <path d="M765 628H778L788 617H807V628"/>
      <path d="M740 647H807V668H803V672H795V685H801V695H790V708L777 715H770L745 695V673H742z"/>
    </g>
    <path d="M742 647H757V665H760V673H745V668H742zM780 660H803V668H780zM745 685H800V693H773L748 698H745z" fill="#3c2c2c"/>
    <path d="M756 647H804V660H775L768 665H756z" fill="url(#pt-h)"/>
    <path d="M745 673H795V685H745z" fill="url(#pt-h)"/>
    <path d="M745 694 763 708H790V693L773 698H748z" fill="url(#pt-h)"/>
    <path d="M778 658 773 672M762 673H785M772 684 767 698M755 685H783" fill="none" stroke="#ffb000" stroke-width="4.500"/>
    <ellipse cx="759" cy="629" rx="12" ry="6" transform="rotate(50 759 629)" fill="#2e7a3a" stroke="#4ca050"/>
    <path d="M760 603V625" stroke="#c8bc00" stroke-width="1.500"/>
    <path d="M681.500 636V677H697" fill="none" stroke="#e8dc00" stroke-width="1.500"/>
    <path d="M855 626h14v6h-14zM861 632h3v4h4v16h-6v-16h-1z" fill="#8a8a8a" stroke="#e4e4e4" stroke-width=".7"/>

    <!-- condenser fan -->
    <g fill="#212830" stroke="#e4e4e4">
      <rect x="915" y="677" width="34" height="5" rx="2"/>
      <rect x="915" y="684" width="34" height="5" rx="2"/>
      <rect x="881" y="690" width="104" height="8" rx="4"/>
      <rect x="929" y="689" width="7" height="14" rx="2"/>
    </g>
    <path d="M912 694h12M941 694h12" stroke="#ccc" stroke-width="3"/>

    <!-- title block -->
    <g stroke="#dcdcdc" fill="none">
      <path d="M1254 808H1369M1254 815H1369M1254 823H1369M1303 823V842M1330 823V842M1350 823V842M1270 823V842M1282 823V842M1294 823V842M1254 808V842M1254 829H1303M1254 835H1303M1330 829H1369M1330 835H1369"/>
    </g>
    <path d="M1294 809h6v5h-6zM1305 809h6v5h-6zM1317 809h6v5h-6zM1328 809h15v5h-15zM1264 817h95v4h-95zM1255 824h14v4h-14zM1271 824h8v4h-8zM1255 830h9v4h-9zM1255 836h8v5h-8zM1303 828h26v3h-26zM1303 834h26v3h-26z" fill="#fff"/>

    <!-- labels -->
    <g class="dtx">
      <text x="999" y="350">Giàn lạnh treo trần</text>
      <text x="809" y="392">Đầu cảm biến nhiệt độ</text>
      <text x="1248" y="391">Van tiết lưu</text>
      <text x="1244" y="571">Van điện từ</text>
      <text x="673" y="592">Van nối</text>
      <text x="673" y="606">áp suất thấp</text>
      <text x="744" y="604">Van an toàn</text>
      <text x="663" y="629">Ly hợp từ</text>
      <text x="903" y="620" font-weight="700">Hơi nhiệt độ cao, áp suất cao</text>
      <text x="825" y="643" font-size="9">Công tắc</text>
      <text x="825" y="653" font-size="9">áp suất cao</text>
      <text x="907" y="661">Quạt giải nhiệt</text>
      <text x="911" y="672">giàn nóng</text>
      <text x="1060" y="644">Mắt ga</text>
      <text x="1148" y="638">Van nối áp</text>
      <text x="1153" y="650">suất cao</text>
      <text x="751" y="733">Máy nén</text>
      <text x="1107" y="742">Bình lọc/hút ẩm</text>
      <text x="914" y="804">Giàn nóng</text>
    </g>

    <!-- UCS icon -->
    <path d="M19 888V950M19 950H80" stroke="#e4e4e4" fill="none"/>
    <rect x="14" y="945" width="11" height="11" fill="none" stroke="#e4e4e4"/>
    <path d="M23 870l5 8 5-8M28 878v8M88 934l10 15M98 934 88 949" fill="none" stroke="#d8d8d8"/>
  </svg>

  <div class="vp-label">[−][Top][2D Wireframe]</div>
  <svg class="vp-btns" width="64" height="16" viewBox="0 0 64 16"><path d="M2 11h12" stroke="#e8e8e8" stroke-width="3"/><path d="M26 4h10v11H26zM29 4V1h9v10h-2" fill="none" stroke="#e8e8e8" stroke-width="1.800"/><path d="M52 2l9 10M61 2l-9 10" stroke="#e8e8e8" stroke-width="3"/></svg>
  <div class="scroll-edge"></div>

  <svg class="compass" width="140" height="150" viewBox="1750 258 140 150">
    <circle cx="1820" cy="331" r="57" fill="none" stroke="#3d4650" stroke-width="13"/>
    <rect x="1792" y="303" width="56" height="56" fill="#a8aaab"/>
    <rect x="1803" y="314" width="34" height="34" fill="#9fa6aa"/>
    <g font-family="Liberation Sans" font-weight="700" text-anchor="middle" fill="#a8aaad">
      <text x="1820" y="280" font-size="21">N</text>
      <text x="1820" y="400" font-size="21">S</text>
      <text x="1881" y="339" font-size="21">E</text>
      <text x="1760" y="339" font-size="21">W</text>
      <text x="1820" y="336" font-size="14" fill="#41505c">TOP</text>
    </g>
  </svg>
  <svg class="wcs-chip" width="60" height="24" viewBox="0 0 60 24"><rect x="2" y="1" width="56" height="20" rx="5" fill="#8b8f9c" stroke="#70747f"/><text x="7" y="16" font-family="Liberation Sans" font-size="13" fill="#555a66">WCS</text><path d="M42 8h10l-5 6z" fill="none" stroke="#a8acb8"/></svg>

  <div class="nav-bar">
    <svg width="40" height="259" viewBox="0 0 40 259" fill="none" stroke="#454d56" stroke-width="1.600">
      <circle cx="33" cy="6" r="4" fill="#6c7279"/>
      <rect x="6" y="22" width="22" height="22" rx="8"/><circle cx="17" cy="33" r="6"/>
      <text x="20" y="50" font-family="Liberation Sans" font-weight="700" font-size="12" fill="#3f5a7c" stroke="none">2D</text>
      <path d="M17 59h7l-3.500 4z" fill="#454d56" stroke="none"/>
      <path d="M3 68h34" stroke="#666c73"/>
      <path d="M11 97 5 83c-1-2 2-3 3-1l3 4V74c0-2 3-2 3 0v5-7c0-2 3-2 3 0v7-6c0-2 3-2 3 0v7-4c0-2 3-2 3 0 0 6 0 12-3 18z" stroke-width="1.800"/>
      <path d="M5 122 24 103M5 103 13 111M5 103v7M5 103h7M5 122v-7M5 122h7M24 103h-7M24 103v7"/>
      <circle cx="26" cy="122" r="6" stroke-width="2"/><path d="M30 127l6 5" stroke-width="3"/>
      <path d="M17 143h7l-3.500 4z" fill="#454d56" stroke="none"/>
      <path d="M20 156l6 8h-3v20h-6v-20h-3z"/><ellipse cx="20" cy="172" rx="16" ry="6"/>
      <path d="M17 190h7l-3.500 4z" fill="#454d56" stroke="none"/>
      <path d="M3 201h34" stroke="#666c73"/>
      <rect x="6" y="211" width="7" height="7"/><rect x="16" y="211" width="7" height="7"/><rect x="26" y="211" width="7" height="7"/>
      <rect x="6" y="221" width="20" height="17"/><path d="M11 225v9l8-4.500z" fill="#454d56" stroke="none"/>
      <circle cx="33" cy="250" r="4" fill="#6c7279"/>
    </svg>
  </div>

  <div class="tip tip-a">Press ESC or ENTER to exit, or right-
click to display shortcut menu.</div>
  <div class="tip tip-b">Command:</div>
  <div class="tip tip-c">Press ESC or ENTER to exit, or right-
click to display shortcut menu.</div>

  <div class="cmd d-flex">
    <div class="cmd-tools d-flex align-items-center">
      <span class="grip"></span>
      <svg width="11" height="11" viewBox="0 0 11 11"><path d="M1 1l9 9M10 1l-9 9" stroke="#eee" stroke-width="1.800"/></svg>
      <svg width="18" height="20" viewBox="0 0 18 20"><path d="M4 1c3 0 5 2 4 5l8 10-3 3L5 9C2 9 1 6 1 4l3 2 2-2z" fill="#e8e8e8"/></svg>
    </div>
    <div class="cmd-in flex-grow-1 d-flex align-items-center">
      <span class="cmd-pr">&gt;_</span><span class="tri cmd-tri"></span>
      <span class="ms-1">Type a command</span>
      <svg class="ms-auto" width="10" height="7" viewBox="0 0 10 7"><path d="M5 0l5 7H0z" fill="#222"/></svg>
    </div>
  </div>
</div>

<div class="lay-bar d-flex">
  <div class="lay-tab lay-model">Model</div>
  <div class="lay-tab lay-1">Layout1</div>
  <div class="lay-tab lay-2">Layout2</div>
  <div class="lay-tab lay-plus">+</div>
</div>

<div class="stat-bar d-flex">
  <div class="cell c1">MODEL</div>
  <div class="cell c2"><svg width="20" height="24"><use href="#st-grid"/></svg><svg width="20" height="22"><use href="#st-dots"/></svg><span class="tri"></span></div>
  <div class="cell c3"><svg width="20" height="26"><use href="#st-ortho"/></svg><svg width="22" height="26"><use href="#st-polar"/></svg><span class="tri"></span><svg width="22" height="30"><use href="#st-iso"/></svg><span class="tri"></span></div>
  <div class="cell c4"><svg width="22" height="26"><use href="#st-ang"/></svg><svg width="20" height="30"><use href="#st-snap"/></svg><span class="tri"></span></div>
  <div class="cell c5"><svg width="22" height="24"><use href="#st-lw"/></svg></div>
  <div class="cell c6"><svg class="anno-on" width="22" height="28"><use href="#st-anno"/></svg><svg class="anno-off" width="22" height="28"><use href="#st-anno"/></svg><svg class="anno-off" width="22" height="28"><use href="#st-anno"/></svg><span>1:1</span><span class="tri"></span></div>
  <div class="cell c7"><svg width="22" height="22"><use href="#st-gear"/></svg><span class="tri"></span><svg width="22" height="22"><use href="#st-plus"/></svg></div>
  <div class="cell c8"><svg width="22" height="28"><use href="#st-shapes"/></svg></div>
  <div class="cell c9"><svg width="24" height="30"><use href="#st-blue"/></svg></div>
  <div class="cell c10"><svg width="20" height="30"><use href="#st-work"/></svg><svg width="24" height="30"><use href="#st-grh"/></svg></div>
  <div class="cell c11"><svg width="22" height="22"><use href="#st-full"/></svg><svg width="22" height="22"><use href="#st-menu"/></svg></div>
</div>

</div>
<script src="https://cdn.jsdelivr.net/npm/bootstrap@5.3.2/dist/js/bootstrap.bundle.min.js"></script>
</body>
</html>
